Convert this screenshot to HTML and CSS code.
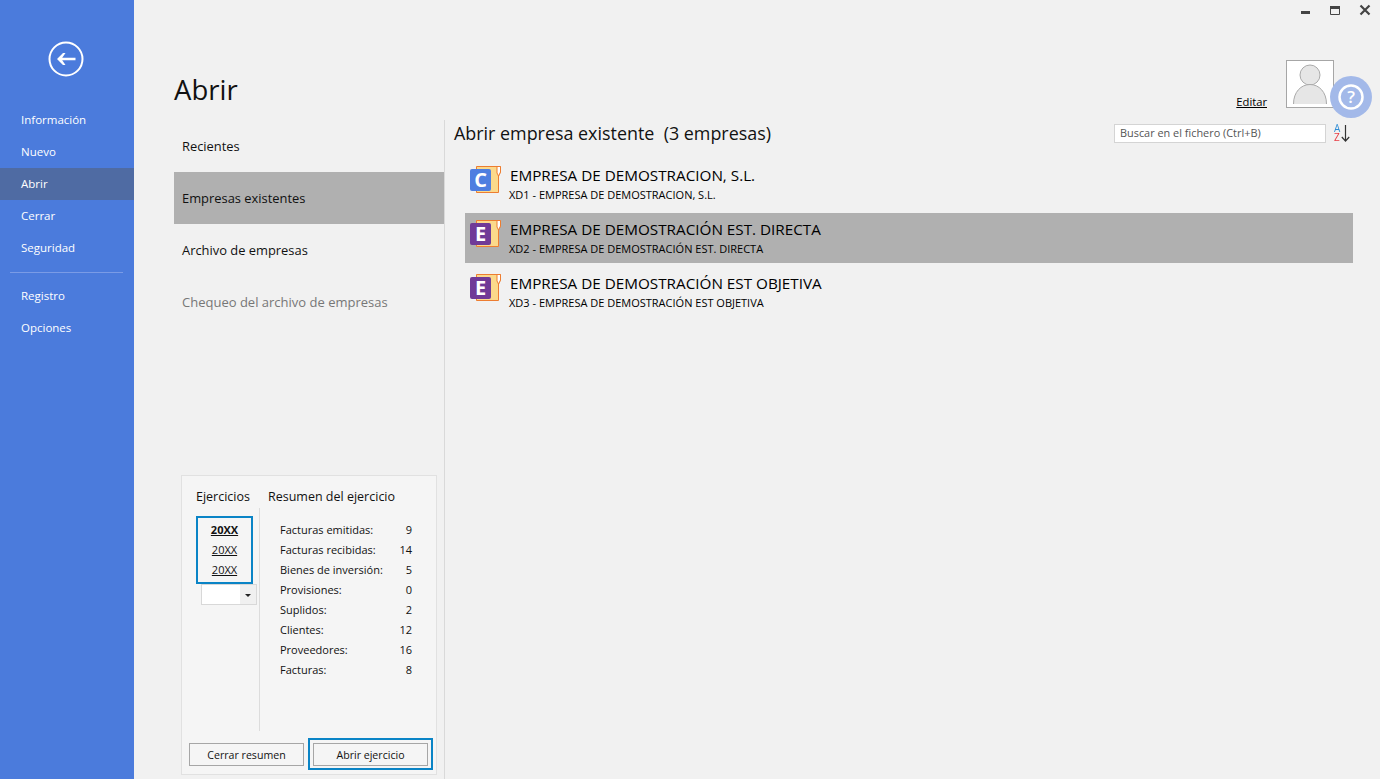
FILE: index.html
```html
<!DOCTYPE html>
<html lang="es">
<head>
	<meta charset="utf-8">
	<title>Abrir</title>
	<link rel="stylesheet" href="styles.css">
</head>
<body>
	<div class="app">
		<div class="side">
			<div class="back">
				<svg width="36" height="36" viewBox="0 0 36 36">
					<circle cx="18" cy="18" r="16.500" fill="none" stroke="#fff" stroke-width="2"/>
					<path d="M9 18 L15 12 H17.500 L14.200 16.800 H27.500 V19.200 H14.200 L17.500 24 H15 Z" fill="#fff"/>
				</svg>
			</div>
			<ul class="nav">
				<li>Información</li>
				<li>Nuevo</li>
				<li class="current">Abrir</li>
				<li>Cerrar</li>
				<li>Seguridad</li>
			</ul>
			<div class="nav-sep"></div>
			<ul class="nav">
				<li>Registro</li>
				<li>Opciones</li>
			</ul>
		</div>
		<div class="main">
			<div class="winbar">
				<svg class="win" width="12" height="12" viewBox="0 0 12 12"><rect x="2" y="7" width="9" height="3" fill="#444"/></svg>
				<svg class="win" width="12" height="12" viewBox="0 0 12 12"><path d="M1.500 2.500 H10.500 V10.500 H1.500 Z" fill="none" stroke="#444"/><rect x="1" y="2" width="10" height="3" fill="#444"/></svg>
				<svg class="win" width="12" height="12" viewBox="0 0 12 12"><path d="M1.500 1.500 L10.500 10.500 M10.500 1.500 L1.500 10.500" stroke="#444" stroke-width="2.200"/></svg>
			</div>
			<div class="head">
				<h1>Abrir</h1>
				<div class="user">
					<a class="edit">Editar</a>
					<div class="avatar">
						<svg width="46" height="46" viewBox="0 0 46 46">
							<circle cx="23" cy="14" r="10" fill="#e6e6e6" stroke="#aaa"/>
							<path d="M6.500 43 C6.500 31 14 23.500 23 23.500 C32 23.500 39.500 31 39.500 43" fill="#e6e6e6" stroke="#aaa"/>
						</svg>
						<div class="help">
							<svg width="28" height="28" viewBox="0 0 28 28">
								<circle cx="14" cy="14" r="11.500" fill="none" stroke="#fff" stroke-width="2.500"/>
								<text x="14" y="20" class="help-q">?</text>
							</svg>
						</div>
					</div>
				</div>
			</div>
			<div class="body">
				<div class="col">
					<ul class="tabs">
						<li>Recientes</li>
						<li class="current">Empresas existentes</li>
						<li>Archivo de empresas</li>
						<li class="off">Chequeo del archivo de empresas</li>
					</ul>
					<div class="resumen">
						<div class="res-top">
							<div class="ejer">
								<div class="res-title">Ejercicios</div>
								<div class="ejer-body">
									<div class="years">
										<a class="bold">20XX</a>
										<a>20XX</a>
										<a>20XX</a>
									</div>
									<div class="combo"><span class="combo-btn"></span></div>
								</div>
							</div>
							<div class="res-right">
								<div class="res-title">Resumen del ejercicio</div>
								<div class="stats">
									<div class="stat"><span>Facturas emitidas:</span><span>9</span></div>
									<div class="stat"><span>Facturas recibidas:</span><span>14</span></div>
									<div class="stat"><span>Bienes de inversión:</span><span>5</span></div>
									<div class="stat"><span>Provisiones:</span><span>0</span></div>
									<div class="stat"><span>Suplidos:</span><span>2</span></div>
									<div class="stat"><span>Clientes:</span><span>12</span></div>
									<div class="stat"><span>Proveedores:</span><span>16</span></div>
									<div class="stat"><span>Facturas:</span><span>8</span></div>
								</div>
							</div>
						</div>
						<div class="res-btns">
							<div class="btn-wrap"><button class="btn">Cerrar resumen</button></div>
							<div class="btn-wrap focus"><button class="btn">Abrir ejercicio</button></div>
						</div>
					</div>
				</div>
				<div class="list">
					<div class="list-head">
						<h2>Abrir empresa existente&nbsp; (3 empresas)</h2>
						<div class="search">Buscar en el fichero (Ctrl+B)</div>
						<div class="sort">
							<span class="sort-az">A Z</span>
							<svg width="9" height="17" viewBox="0 0 9 17"><path d="M4.500 0 V16 M0.800 12 L4.500 16 L8.200 12" fill="none" stroke="#333" stroke-width="1.200"/></svg>
						</div>
					</div>
					<div class="rows">
						<div class="row">
							<svg class="ico" width="32" height="30" viewBox="0 0 32 30">
								<path d="M6.500 1.500 H30.500 V7 L28.500 11 V27.500 H6.500 Z" fill="#fbd98b" stroke="#ed7d31"/>
								<path d="M27 1.500 H30.500 V7 L28.500 11 L27 8 Z" fill="#fff" stroke="#ed7d31"/>
								<rect x="0" y="4" width="21" height="22" rx="2" fill="#4f7ee0"/>
								<text x="10.500" y="22" class="ico-t">C</text>
							</svg>
							<div class="row-txt">
								<div class="row-name">EMPRESA DE DEMOSTRACION, S.L.</div>
								<div class="row-sub">XD1 - EMPRESA DE DEMOSTRACION, S.L.</div>
							</div>
						</div>
						<div class="row current">
							<svg class="ico" width="32" height="30" viewBox="0 0 32 30">
								<path d="M6.500 1.500 H30.500 V7 L28.500 11 V27.500 H6.500 Z" fill="#fbd98b" stroke="#ed7d31"/>
								<path d="M27 1.500 H30.500 V7 L28.500 11 L27 8 Z" fill="#fff" stroke="#ed7d31"/>
								<rect x="0" y="4" width="21" height="22" rx="2" fill="#703a97"/>
								<text x="10.500" y="22" class="ico-t">E</text>
							</svg>
							<div class="row-txt">
								<div class="row-name">EMPRESA DE DEMOSTRACIÓN EST. DIRECTA</div>
								<div class="row-sub">XD2 - EMPRESA DE DEMOSTRACIÓN EST. DIRECTA</div>
							</div>
						</div>
						<div class="row">
							<svg class="ico" width="32" height="30" viewBox="0 0 32 30">
								<path d="M6.500 1.500 H30.500 V7 L28.500 11 V27.500 H6.500 Z" fill="#fbd98b" stroke="#ed7d31"/>
								<path d="M27 1.500 H30.500 V7 L28.500 11 L27 8 Z" fill="#fff" stroke="#ed7d31"/>
								<rect x="0" y="4" width="21" height="22" rx="2" fill="#703a97"/>
								<text x="10.500" y="22" class="ico-t">E</text>
							</svg>
							<div class="row-txt">
								<div class="row-name">EMPRESA DE DEMOSTRACIÓN EST OBJETIVA</div>
								<div class="row-sub">XD3 - EMPRESA DE DEMOSTRACIÓN EST OBJETIVA</div>
							</div>
						</div>
					</div>
				</div>
			</div>
		</div>
	</div>
</body>
</html>
```

FILE: styles.css
```css
* {padding: 0; margin: 0; list-style: none; box-sizing: border-box;}
html, body {height: 100%; overflow: hidden;}
body {
	font-family: "Open Sans", "Noto Sans", "Liberation Sans", sans-serif;
	font-size: 12px;
	color: #111;
	background: #f1f1f1;
}
.app {
	display: flex;
	height: 779px;
}

/* barra lateral */
.side {
	width: 134px;
	flex: none;
	background: #4b7bdc;
	color: #fff;
}
.back {
	display: flex;
	justify-content: center;
	padding: 41px 3px 27px 0;
}
.nav li {
	height: 32px;
	line-height: 32px;
	padding-left: 21px;
	font-size: 11.500px;
}
.nav li.current {
	background: #4f6ba3;
}
.nav-sep {
	height: 1px;
	margin: 8px 11px 7px 10px;
	background: #7a9be6;
}

/* contenido */
.main {
	flex: 1;
	display: flex;
	flex-direction: column;
	min-width: 0;
}
.winbar {
	display: flex;
	justify-content: flex-end;
	gap: 18px;
	height: 22px;
	padding: 4px 9px 0 0;
}
.head {
	display: flex;
	justify-content: space-between;
	align-items: flex-start;
	height: 97px;
	padding-left: 40px;
}
.head h1 {
	font-size: 27.500px;
	font-weight: 400;
	line-height: 40px;
	margin-top: 48px;
	color: #111;
}
.user {
	display: flex;
	align-items: flex-end;
	gap: 19px;
	margin: 38px 46px 0 0;
}
.edit {
	font-size: 11.200px;
	color: #000;
	text-decoration: underline;
	margin-bottom: -2px;
	line-height: 16px;
}
.avatar {
	width: 48px;
	height: 48px;
	background: #fff;
	border: 1px solid #a6a6a6;
	position: relative;
}
.avatar svg {
	display: block;
}
.help {
	position: absolute;
	left: 43px;
	top: 15px;
	width: 42px;
	height: 42px;
	border-radius: 50%;
	background: #a3b9e9;
	display: flex;
	align-items: center;
	justify-content: center;
}
.help-q {
	fill: #fff;
	font-size: 17px;
	font-weight: 600;
	text-anchor: middle;
}
.body {
	flex: 1;
	display: flex;
	min-height: 0;
	padding-left: 40px;
}
.col {
	width: 271px;
	flex: none;
	display: flex;
	flex-direction: column;
	border-right: 1px solid #d9d9d9;
	margin-top: 1px;
}
.tabs li {
	height: 52px;
	line-height: 52px;
	padding-left: 8px;
	font-size: 12.900px;
}
.tabs li.current {
	background: #b0b0b0;
}
.tabs li.off {
	color: #777;
	font-size: 13px;
}
.resumen {
	margin: auto 7px 4px 7px;
	height: 300px;
	border: 1px solid #e1e1e1;
	background: #f5f5f5;
	display: flex;
	flex-direction: column;
}
.res-top {
	flex: 1;
	display: flex;
	padding: 12px 0 0 14px;
}
.res-title {
	font-size: 12.500px;
	line-height: 18px;
}
.ejer {
	width: 64px;
	flex: none;
	display: flex;
	flex-direction: column;
	margin-bottom: 7px;
}
.ejer .res-title {
	white-space: nowrap;
}
.ejer-body {
	flex: 1;
	margin-top: 2px;
	padding-top: 8px;
	border-right: 1px solid #dcdcdc;
}
.years {
	width: 57px;
	height: 68px;
	border: 2px solid #0a84c6;
	display: flex;
	flex-direction: column;
	align-items: center;
	padding-top: 2px;
}
.years a {
	height: 20px;
	line-height: 20px;
	font-size: 11px;
	text-decoration: underline;
}
.years a.bold {
	font-weight: 700;
}
.combo {
	width: 56px;
	height: 21px;
	margin: 0 0 0 5px;
	background: #fff;
	border: 1px solid #d8d8d8;
	display: flex;
	justify-content: flex-end;
}
.combo-btn {
	width: 16px;
	background: #f0f0f0;
	position: relative;
}
.combo-btn::after {
	content: "";
	position: absolute;
	left: 5px;
	top: 9px;
	border: 3px solid transparent;
	border-top-color: #222;
	border-bottom: 0;
}
.res-right {
	flex: 1;
	padding-left: 8px;
	padding-right: 24px;
}
.stats {
	padding: 14px 0 0 12px;
}
.stat {
	display: flex;
	justify-content: space-between;
	height: 20px;
	line-height: 20px;
	font-size: 11px;
	font-weight: 500;
}
.res-btns {
	display: flex;
	justify-content: space-between;
	padding: 0 3px 4px 7px;
	align-items: flex-end;
}
.btn-wrap {
	flex: none;
	padding: 5px 0 4px;
}
.btn-wrap.focus {
	border: 2px solid #0a84c6;
	padding: 3px 3px 2px;
}
.btn {
	display: block;
	width: 115px;
	height: 23px;
	font: inherit;
	font-size: 10.600px;
	color: #111;
	background: #f5f5f5;
	border: 1px solid #a6a6a6;
}
.list {
	flex: 1;
	min-width: 0;
	padding-right: 27px;
}
.list-head {
	display: flex;
	align-items: center;
	height: 28px;
	padding-left: 9px;
	margin-bottom: 12px;
}
.list-head h2 {
	flex: 1;
	font-size: 17.900px;
	font-weight: 400;
	color: #111;
	white-space: nowrap;
}
.search {
	width: 212px;
	height: 19px;
	line-height: 16px;
	background: #fff;
	border: 1px solid #d4d4d4;
	padding-left: 5px;
	font-size: 10.900px;
	color: #555;
}
.sort {
	display: flex;
	align-items: center;
	margin: 0 3px 0 8px;
	width: 16px;
}
/* una sola palabra en dos lineas, azul arriba y rojo abajo */
.sort-az {
	width: 7px;
	font-size: 10px;
	line-height: 9px;
	font-weight: 500;
	color: transparent;
	background: linear-gradient(#2a8ad4 50%, #e8343c 50%);
	-webkit-background-clip: text;
	background-clip: text;
}
.rows {
	margin-left: 20px;
}
.row {
	display: flex;
	height: 50px;
	margin-bottom: 4px;
	padding: 7px 0 0 5px;
}
.row.current {
	background: #b0b0b0;
}
.ico {
	flex: none;
	margin-top: -1px;
}
.ico-t {
	fill: #fff;
	font-size: 20px;
	font-weight: 700;
	text-anchor: middle;
}
.row-txt {
	margin-left: 7px;
}
.row-name {
	font-size: 15.250px;
	line-height: 19px;
	margin-bottom: 2px;
	padding-left: 1px;
	color: #000;
}
.row-sub {
	font-size: 11px;
	line-height: 16px;
	font-weight: 500;
	color: #000;
}
```
